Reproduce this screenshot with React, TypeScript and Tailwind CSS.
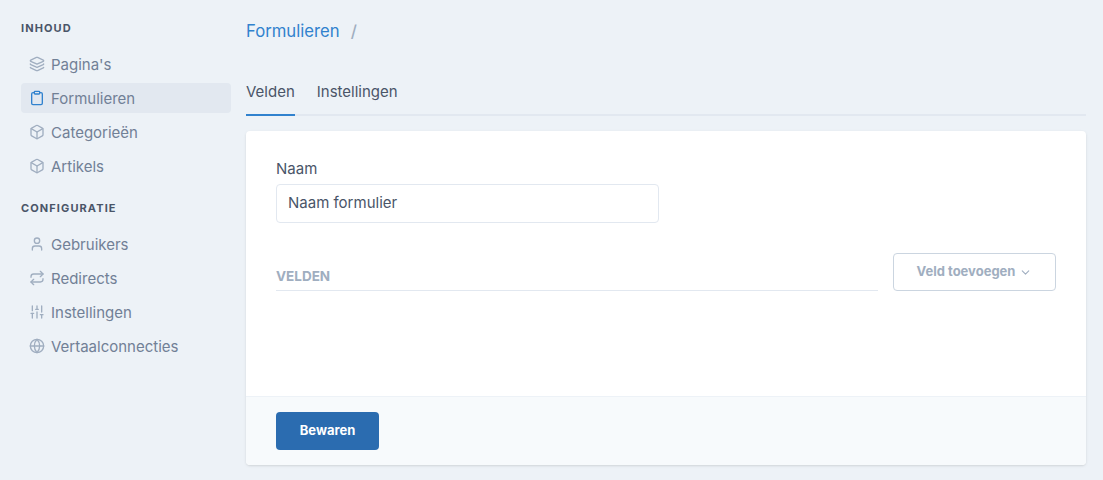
import { Box, ChevronDown, Clipboard, Globe, Layers, Repeat, SlidersVertical, User } from "lucide-react"
import type { ComponentType } from "react"

type NavItem = {
    label: string
    icon: ComponentType<{ className?: string; strokeWidth?: number }>
    active?: boolean
}

const content: NavItem[] = [
    { label: "Pagina's", icon: Layers },
    { label: "Formulieren", icon: Clipboard, active: true },
    { label: "Categorieën", icon: Box },
    { label: "Artikels", icon: Box },
]

const config: NavItem[] = [
    { label: "Gebruikers", icon: User },
    { label: "Redirects", icon: Repeat },
    { label: "Instellingen", icon: SlidersVertical },
    { label: "Vertaalconnecties", icon: Globe },
]

function NavLink({ item }: { item: NavItem }) {
    const Icon = item.icon
    return (
        <a className={item.active ? "flex items-center h-[30px] mb-[4px] px-2 rounded bg-[#e2e8f0] text-[#718096] text-[15px]" : "flex items-center h-[30px] mb-[4px] px-2 rounded text-[#718096] text-[15px]"}>
            <Icon strokeWidth={2} className={item.active ? "w-[16px] h-[16px] mr-[6px] text-[#3182ce]" : "w-[16px] h-[16px] mr-[6px] text-[#a0aec0]"} />
            <span className="pt-[2px]">{item.label}</span>
        </a>
    )
}

export default function App() {
    return (
        <div className="flex w-[1103px] h-[480px] overflow-hidden bg-[#edf2f7] font-['Inter',sans-serif] pl-[21px]">
            <aside className="w-[210px] shrink-0 pt-[22px]">
                <h3 className="text-[11px] leading-[12px] font-bold tracking-[0.1em] text-[#4a5568] mb-[15px]">INHOUD</h3>
                {content.map((item) => <NavLink key={item.label} item={item} />)}
                <h3 className="text-[11px] leading-[12px] font-bold tracking-[0.1em] text-[#4a5568] mt-[21px] mb-[15px]">CONFIGURATIE</h3>
                {config.map((item) => <NavLink key={item.label} item={item} />)}
            </aside>
            <main className="w-[840px] ml-[15px] pt-[22px]">
                <div className="flex items-center h-[20px] text-[16.7px]">
                    <span className="text-[#3182ce]">Formulieren</span>
                    <span className="ml-[11px] text-[#a0aec0] font-medium">/</span>
                </div>
                <div className="flex mt-[29px] h-[45px] border-b-2 border-[#e2e8f0] text-[15px]">
                    <div className="h-[45px] pt-[10px] border-b-2 border-[#3182ce] text-[#4a5568]">Velden</div>
                    <div className="h-[45px] pt-[10px] ml-[22px] text-[#4a5568]">Instellingen</div>
                </div>
                <div className="mt-[15px] h-[334px] flex flex-col bg-white rounded shadow">
                    <div className="flex-1 px-[30px] pt-[28px]">
                        <label className="block text-[15px] leading-[20px] text-[#4a5568]">Naam</label>
                        <input readOnly value="Naam formulier" className="block mt-[5px] w-[383px] h-[39px] pl-[11px] pr-3 pb-[2px] rounded border border-[#e2e8f0] text-[15px] text-[#4a5568] outline-none" />
                        <div className="flex items-start mt-[30px]">
                            <div className="flex-1 h-[38px] flex items-end border-b border-[#e2e8f0] pb-[7px]">
                                <span className="text-[13.5px] leading-[14px] font-bold text-[#a0aec0]">VELDEN</span>
                            </div>
                            <button className="ml-[15px] w-[163px] h-[38px] flex items-center justify-center rounded border border-[#cbd5e0] text-[13px] font-bold text-[#a0aec0]">
                                Veld toevoegen
                                <ChevronDown className="w-[13px] h-[13px] ml-[4px]" />
                            </button>
                        </div>
                    </div>
                    <div className="h-[69px] px-[30px] pt-[15px] bg-[#f7fafc] border-t border-[#edf2f7] rounded-b">
                        <button className="w-[103px] h-[38px] rounded bg-[#2b6cb0] text-white text-[13px] font-bold">Bewaren</button>
                    </div>
                </div>
            </main>
        </div>
    )
}
